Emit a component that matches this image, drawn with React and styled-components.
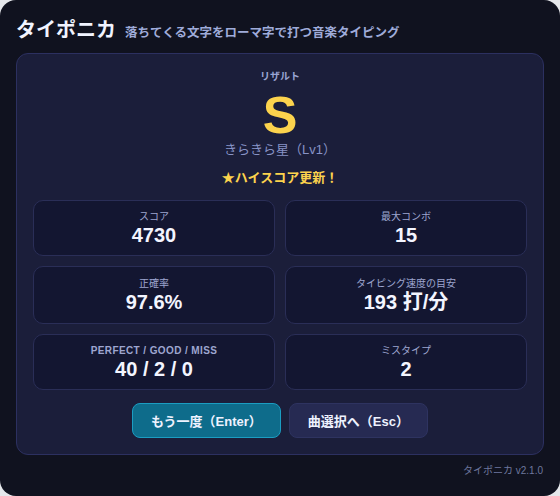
import styled, { createGlobalStyle } from "styled-components";

const GlobalStyle = createGlobalStyle`
  html, body {
    margin: 0;
    padding: 0;
    background: #e5e7eb;
  }
  body {
    font-family: "Liberation Sans", "Noto Sans CJK JP", sans-serif;
  }
`;

const stats = [
  { label: "スコア", value: "4730" },
  { label: "最大コンボ", value: "15" },
  { label: "正確率", value: "97.6%" },
  { label: "タイピング速度の目安", value: "193 打/分" },
  { label: "PERFECT / GOOD / MISS", value: "40 / 2 / 0", latin: true },
  { label: "ミスタイプ", value: "2" },
];

const App = () => {
  return (
    <>
      <GlobalStyle />
      <Screen>
        <Header>
          <Title>タイポニカ</Title>
          <Subtitle>落ちてくる文字をローマ字で打つ音楽タイピング</Subtitle>
        </Header>
        <Card>
          <Caption>リザルト</Caption>
          <Rank>S</Rank>
          <SongName>きらきら星（Lv1）</SongName>
          <HighScore>★ハイスコア更新！</HighScore>
          <StatGrid>
            {stats.map((s) => (
              <StatBox key={s.label}>
                <StatLabel latin={s.latin}>{s.label}</StatLabel>
                <StatValue>{s.value}</StatValue>
              </StatBox>
            ))}
          </StatGrid>
          <Actions>
            <ActionButton primary>もう一度（Enter）</ActionButton>
            <ActionButton>曲選択へ（Esc）</ActionButton>
          </Actions>
        </Card>
        <Footer>タイポニカ v2.1.0</Footer>
      </Screen>
    </>
  );
};

const Screen = styled.div`
  width: 560px;
  height: 496px;
  box-sizing: border-box;
  padding: 18px 16px 0;
  background: #10121f;
  border-radius: 16px;
  display: flex;
  flex-direction: column;
`;

const Header = styled.div`
  display: flex;
  align-items: baseline;
  gap: 9px;
  height: 24px;
  line-height: 24px;
  margin-bottom: 11px;
`;

const Title = styled.h1`
  margin: 0;
  font-size: 20px;
  font-weight: 700;
  color: #f1f4ff;
`;

const Subtitle = styled.span`
  font-size: 12.5px;
  font-weight: 700;
  color: #9fabd9;
`;

const Card = styled.div`
  background: #1b1e3a;
  border: 1px solid #2c3060;
  border-radius: 12px;
  padding: 16px;
  display: flex;
  flex-direction: column;
  align-items: center;
`;

const Caption = styled.div`
  font-size: 10px;
  font-weight: 700;
  line-height: 14px;
  color: #9aa5d3;
`;

const Rank = styled.div`
  margin-top: 5px;
  font-size: 52px;
  font-weight: 700;
  line-height: 52px;
  color: #fcd34d;
`;

const SongName = styled.div`
  font-size: 13px;
  line-height: 18px;
  color: #8893c6;
`;

const HighScore = styled.div`
  margin-top: 11px;
  font-size: 13px;
  font-weight: 700;
  line-height: 16px;
  color: #fcd34d;
`;

const StatGrid = styled.div`
  margin-top: 14px;
  align-self: stretch;
  display: grid;
  grid-template-columns: 1fr 1fr;
  grid-template-rows: 56px 58px 56px;
  gap: 10px;
`;

const StatBox = styled.div`
  background: #131631;
  border: 1px solid #2a2e57;
  border-radius: 10px;
  display: flex;
  flex-direction: column;
  align-items: center;
  justify-content: center;
`;

const StatLabel = styled.div`
  font-size: 10px;
  line-height: 14px;
  font-weight: ${(p) => (p.latin ? 700 : 400)};
  letter-spacing: ${(p) => (p.latin ? "0.4px" : "0")};
  color: #9ea6d0;
`;

const StatValue = styled.div`
  font-size: 20px;
  font-weight: 700;
  line-height: 23px;
  color: #f3f5ff;
`;

const Actions = styled.div`
  margin-top: 13px;
  display: flex;
  gap: 8px;
  justify-content: center;
`;

const ActionButton = styled.button`
  height: 35px;
  padding: 0 18px;
  border-radius: 8px;
  font-family: inherit;
  font-size: 13px;
  font-weight: 700;
  color: #eef2ff;
  cursor: pointer;
  background: ${(p) => (p.primary ? "#0e6c8b" : "#262a52")};
  border: 1px solid ${(p) => (p.primary ? "#1b9dc2" : "#2e3360")};
`;

const Footer = styled.div`
  margin-top: 9px;
  margin-right: 1px;
  text-align: right;
  font-size: 10px;
  line-height: 14px;
  color: #6e779e;
`;

export default App;
